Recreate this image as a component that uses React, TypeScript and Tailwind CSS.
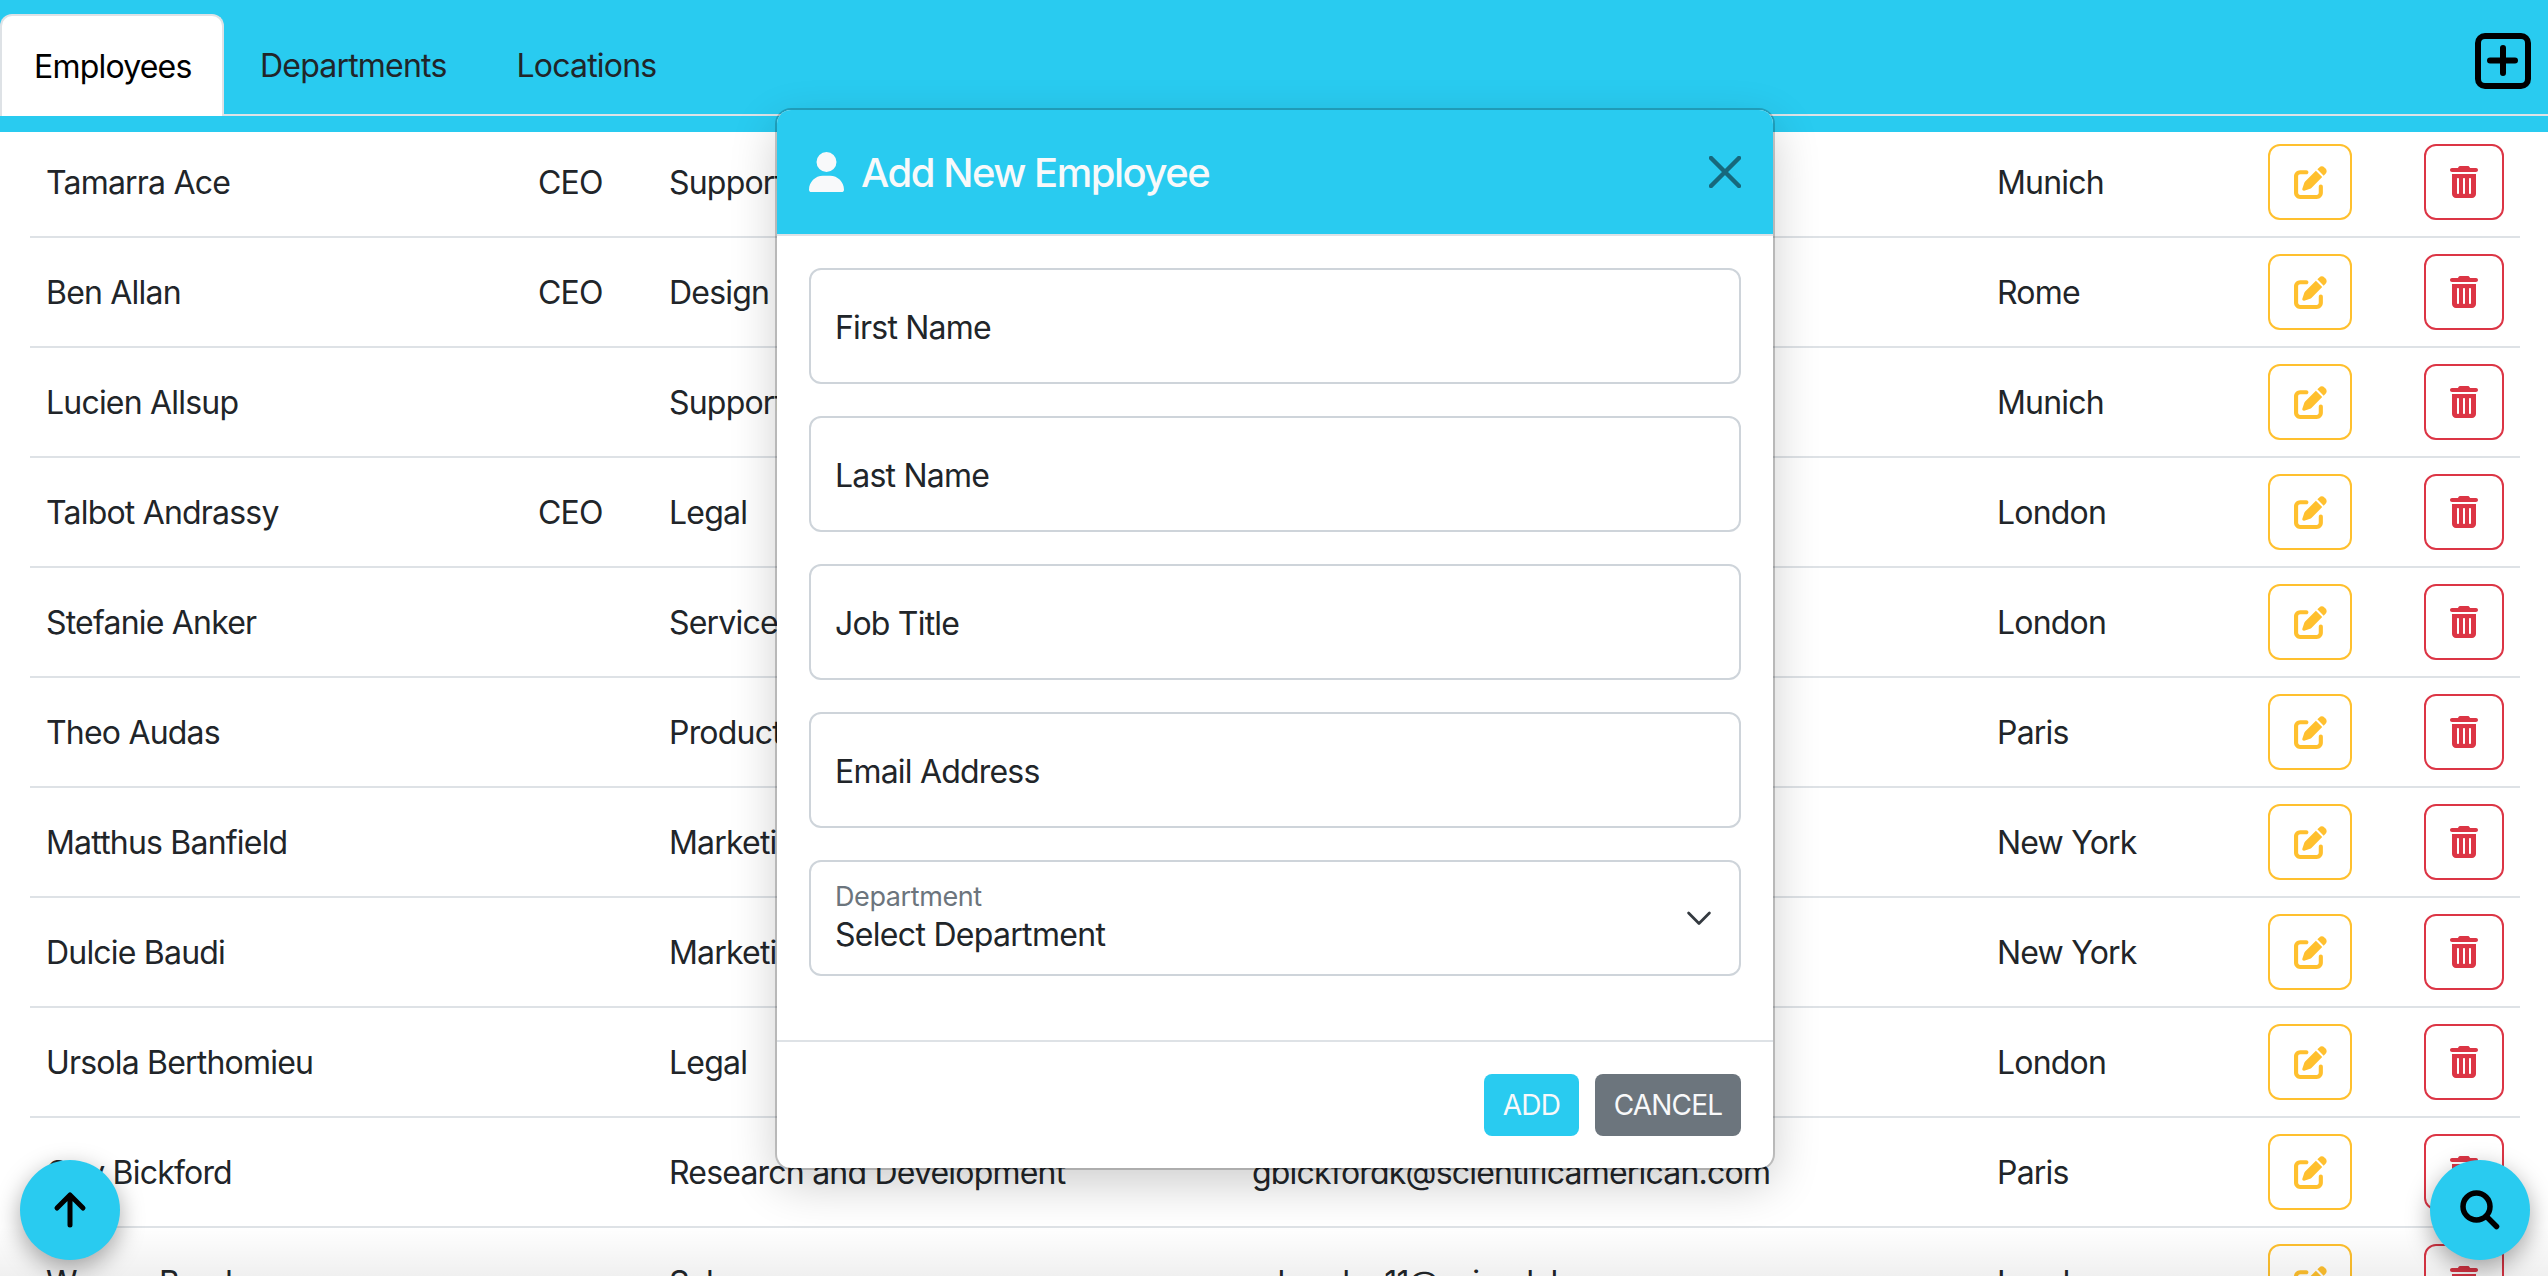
import { FaPenToSquare, FaTrashCan, FaUser } from "react-icons/fa6";

interface Employee {
  name: string;
  title?: string;
  department: string;
  email?: string;
  location: string;
}

const employees: Employee[] = [
  { name: "Tamarra Ace", title: "CEO", department: "Support", location: "Munich" },
  { name: "Ben Allan", title: "CEO", department: "Design", location: "Rome" },
  { name: "Lucien Allsup", department: "Support", location: "Munich" },
  { name: "Talbot Andrassy", title: "CEO", department: "Legal", location: "London" },
  { name: "Stefanie Anker", department: "Services", location: "London" },
  { name: "Theo Audas", department: "Product Management", location: "Paris" },
  { name: "Matthus Banfield", department: "Marketing", location: "New York" },
  { name: "Dulcie Baudi", department: "Marketing", location: "New York" },
  { name: "Ursola Berthomieu", department: "Legal", location: "London" },
  {
    name: "Guy Bickford",
    department: "Research and Development",
    email: "gbickfordk@scientificamerican.com",
    location: "Paris",
  },
  {
    name: "Warren Boyd",
    department: "Sales",
    email: "wboydne11@sciandal.com",
    location: "London",
  },
];

const fields = ["First Name", "Last Name", "Job Title", "Email Address"];

function EmployeeRow({ employee }: { employee: Employee }) {
  return (
    <div className="grid h-[110px] grid-cols-[492px_131px_583px_745px_271px_156px_112px] items-center border-b-2 border-[#dee2e6] text-[32px] text-[#212529]">
      <div className="pt-0.5 pl-4">{employee.name}</div>
      <div className="pt-0.5 pl-4">{employee.title}</div>
      <div className="pt-0.5 pl-4 whitespace-nowrap">{employee.department}</div>
      <div className="pt-0.5 pl-4 whitespace-nowrap">{employee.email}</div>
      <div className="pt-0.5 pl-4">{employee.location}</div>
      <div className="pl-4">
        <button className="flex h-[76px] w-[84px] items-center justify-center rounded-xl border-2 border-[#ffc02e] text-[#ffc02e]">
          <FaPenToSquare size={33} />
        </button>
      </div>
      <div className="pl-4">
        <button className="flex h-[76px] w-[80px] items-center justify-center rounded-xl border-2 border-[#dc3545] text-[#dc3545]">
          <FaTrashCan size={32} />
        </button>
      </div>
    </div>
  );
}

function AddEmployeeModal() {
  return (
    <div className="absolute top-[110px] left-[777px] z-20 w-[996px] overflow-hidden rounded-[14px] bg-white text-[32px] text-[#212529] shadow-[0_0_0_2px_rgba(0,0,0,0.2),0_16px_48px_rgba(0,0,0,0.2)]">
      <div className="flex h-[126px] items-center justify-between border-b-2 border-[#dee2e6] bg-[#29cbf0] px-8 text-[#f8f9fa]">
        <div className="flex items-center gap-[17px]">
          <FaUser className="h-10 w-[35px]" />
          <h5 className="pt-0.5 text-[40px] leading-none font-medium tracking-[-1.5px]">Add New Employee</h5>
        </div>
        <svg width="32" height="32" viewBox="0 0 32 32" fill="none" stroke="#17687c" strokeWidth="4.5" strokeLinecap="round">
          <path d="M2 2 30 30M30 2 2 30" />
        </svg>
      </div>

      <div className="flex flex-col gap-8 px-8 pt-8 pb-16">
        {fields.map((field) => (
          <input
            key={field}
            placeholder={field}
            className="h-[116px] w-full rounded-xl border-2 border-[#ced4da] px-6 pt-0.5 placeholder:text-[#212529]"
          />
        ))}
        <div className="flex h-[116px] items-center justify-between rounded-xl border-2 border-[#ced4da] px-6">
          <div>
            <div className="-mt-0.5 text-[27px] leading-[36px] tracking-[-0.4px] text-[#6c757d]">Department</div>
            <div className="leading-[40px] tracking-[-0.7px]">Select Department</div>
          </div>
          <svg width="32" height="32" viewBox="0 0 16 16" fill="none" stroke="#343a40" strokeWidth="1.4" strokeLinecap="round" strokeLinejoin="round">
            <path d="m2.8 5.5 5.2 5.2 5.2-5.2" />
          </svg>
        </div>
      </div>

      <div className="flex justify-end gap-4 border-t-2 border-[#dee2e6] px-8 pt-8 pb-8 text-[28px] text-[#f8f9fa]">
        <button className="h-[62px] w-[95px] rounded-lg bg-[#29cbf0]">ADD</button>
        <button className="h-[62px] w-[146px] rounded-lg bg-[#6c757d]">CANCEL</button>
      </div>
    </div>
  );
}

export default function App() {
  return (
    <div className="relative h-screen overflow-hidden bg-white font-['Inter',sans-serif] tracking-[-0.8px]">
      <header className="relative z-10 h-[132px] bg-[#29cbf0] pt-[14px]">
        <nav className="flex h-[102px] items-end justify-between border-b-2 border-[#dee2e6] pr-[17px] text-[32px] text-[#212529]">
          <div className="-mb-[2px] flex h-[102px]">
            <div className="flex w-[224px] items-center rounded-t-xl border-2 border-b-0 border-[#dee2e6] bg-white pt-0.5 pl-8 text-black">
              Employees
            </div>
            <div className="flex items-center px-9 pt-0.5">Departments</div>
            <div className="flex items-center px-[34px] pt-0.5">Locations</div>
          </div>
          <svg className="mb-[6px] self-center" width="56" height="56" viewBox="0 0 56 56" fill="none" stroke="black" strokeWidth="6" strokeLinecap="round">
            <rect x="3" y="3" width="50" height="50" rx="7" />
            <path d="M28 15v25M15 27.5h25" />
          </svg>
        </nav>
      </header>

      <main className="-mt-1 pr-7 pl-[30px]">
        {employees.map((employee) => (
          <EmployeeRow key={employee.name} employee={employee} />
        ))}
      </main>

      <div className="pointer-events-none absolute inset-x-0 bottom-0 z-10 h-[50px] bg-gradient-to-b from-black/0 to-black/6" />

      <AddEmployeeModal />

      <button className="absolute bottom-4 left-5 z-30 flex h-[100px] w-[100px] items-center justify-center rounded-full bg-[#29cbf0] shadow-[0_8px_24px_rgba(0,0,0,0.35)]">
        <svg width="40" height="40" viewBox="0 0 40 40" fill="none" stroke="black" strokeWidth="5" strokeLinecap="round" strokeLinejoin="round">
          <path d="M20 5v30M7 18 20 5l13 13" />
        </svg>
      </button>
      <button className="absolute right-[18px] bottom-4 z-30 flex h-[100px] w-[100px] items-center justify-center rounded-full bg-[#29cbf0] shadow-[0_8px_24px_rgba(0,0,0,0.35)]">
        <svg width="40" height="40" viewBox="0 0 40 40" fill="none" stroke="black" strokeWidth="5.5" strokeLinecap="round">
          <circle cx="16.5" cy="16.5" r="13.5" />
          <path d="M26.5 26.5 36.5 36.5" />
        </svg>
      </button>
    </div>
  );
}
